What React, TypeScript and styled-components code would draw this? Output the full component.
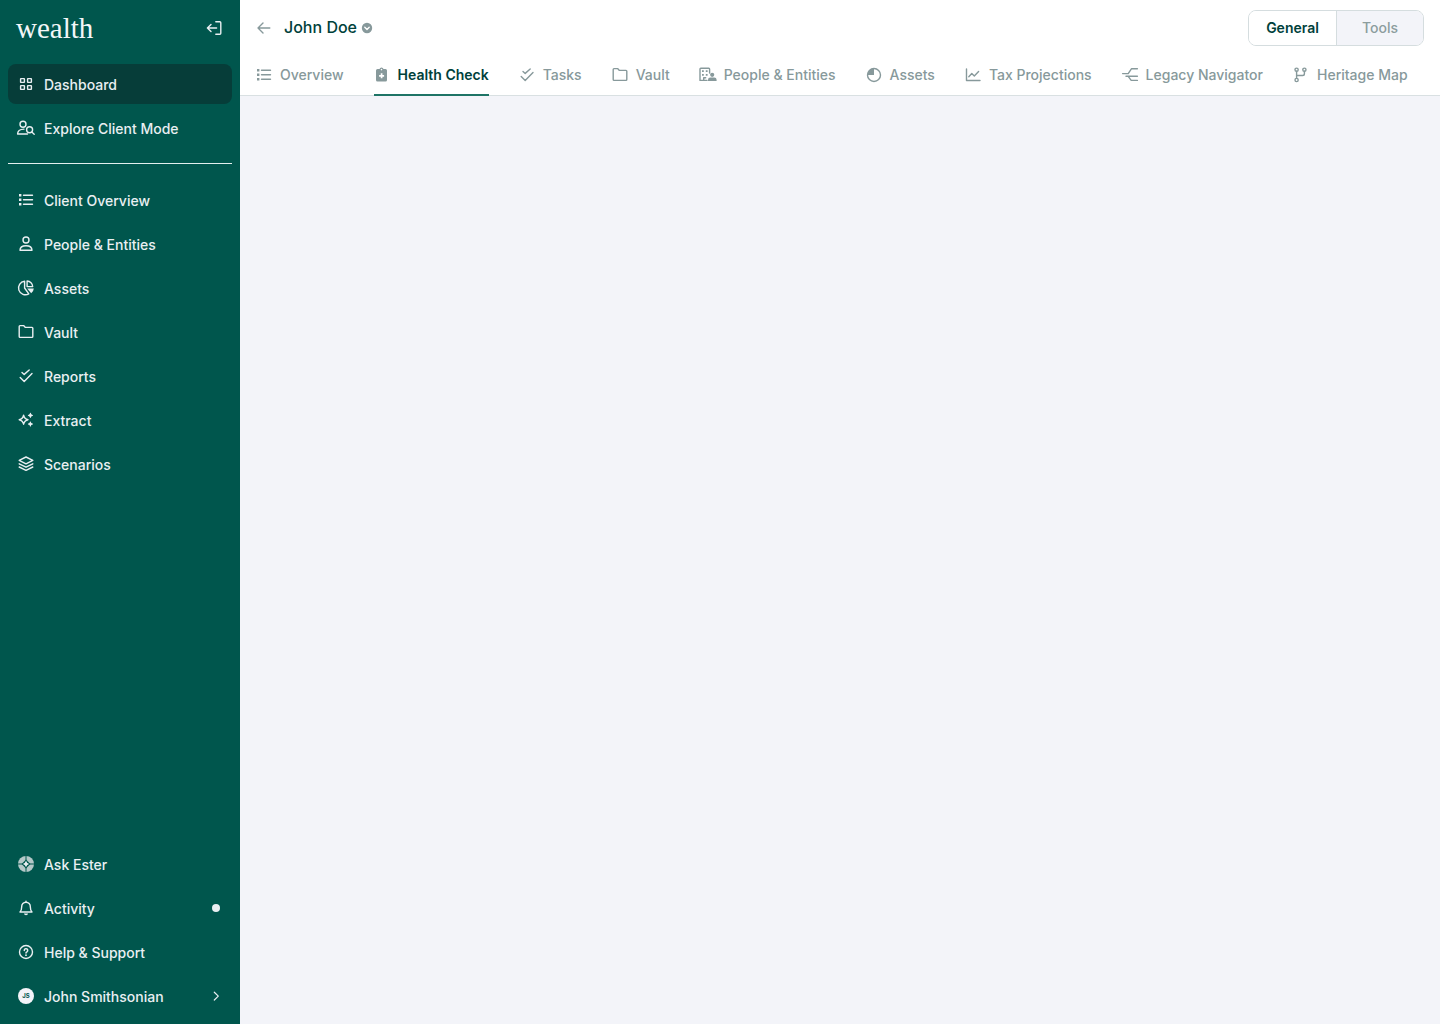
import React from "react";
import styled, { createGlobalStyle, css } from "styled-components";

const GlobalStyle = createGlobalStyle`
  *, *::before, *::after { box-sizing: border-box; }
  body {
    margin: 0;
    background: #f3f4f9;
    font-family: Inter, "Liberation Sans", sans-serif;
    font-size: 14px;
    line-height: 20px;
    font-weight: 500;
  }
  button { font: inherit; color: inherit; background: none; border: 0; padding: 0; cursor: pointer; }
  a { color: inherit; text-decoration: none; }
`;

const Shell = styled.div`
  display: grid;
  grid-template-columns: 240px minmax(0, 1fr);
  min-height: 100vh;
`;

const Sidebar = styled.aside`
  display: flex;
  flex-direction: column;
  padding: 0 8px 8px;
  background: #00564d;
  color: #e9eff2;
`;

const Brand = styled.div`
  display: flex;
  align-items: center;
  justify-content: space-between;
  height: 56px;
  margin-bottom: 8px;
  padding: 0 10px 0 8px;
`;

const Wordmark = styled.a`
  font-family: "Liberation Serif", serif;
  font-size: 29px;
  font-weight: 400;
  line-height: 32px;
  color: #f3f6f8;
`;

const IconButton = styled.button`
  display: flex;
  align-items: center;
`;

const NavList = styled.nav`
  display: flex;
  flex-direction: column;
  gap: 4px;
`;

const Divider = styled.hr`
  width: 100%;
  height: 1px;
  margin: 15px 0 16px;
  border: 0;
  background: #e3f0ef;
`;

const navRow = css`
  display: flex;
  align-items: center;
  gap: 10px;
  width: 100%;
  height: 40px;
  padding: 0 12px 0 10px;
  border-radius: 8px;
  text-align: left;
`;

const NavLink = styled.a<{ $active?: boolean }>`
  ${navRow}
  background: ${(p) => (p.$active ? "#063d39" : "transparent")};
`;

const NavButton = styled.button`
  ${navRow}
`;

const NavLabel = styled.span`
  flex: 1;
  padding-top: 2px;
`;

const Unread = styled.span`
  width: 8px;
  height: 8px;
  border-radius: 50%;
  background: #e9eff2;
`;

const Avatar = styled.span`
  display: grid;
  place-items: center;
  width: 16px;
  height: 16px;
  border-radius: 50%;
  background: #f3f4f9;
  color: #00564d;
  font-size: 6px;
  font-weight: 700;
  line-height: 8px;
`;

const Footer = styled(NavList)`
  margin-top: auto;
`;

const Page = styled.div`
  display: flex;
  flex-direction: column;
`;

const Header = styled.header`
  background: #fff;
  border-bottom: 1px solid #d9e0e2;
`;

const TitleBar = styled.div`
  display: flex;
  align-items: center;
  justify-content: space-between;
  height: 56px;
  padding: 0 16px;
`;

const ClientTitle = styled.div`
  display: flex;
  align-items: center;
  gap: 12px;
  color: #87999b;
`;

const ClientName = styled.h1`
  margin: 0;
  padding-bottom: 2px;
  font-size: 16px;
  line-height: 24px;
  font-weight: 500;
  color: #00413b;
`;

const ClientPicker = styled.div`
  display: flex;
  align-items: center;
  gap: 4px;
`;

const Segmented = styled.div`
  display: grid;
  grid-template-columns: 1fr 1fr;
  width: 176px;
  height: 36px;
  overflow: hidden;
  border: 1px solid #d5dddf;
  border-radius: 8px;
`;

const Segment = styled.button<{ $active?: boolean }>`
  font-weight: ${(p) => (p.$active ? 600 : 500)};
  color: ${(p) => (p.$active ? "#00413b" : "#8c9d9e")};
  background: ${(p) => (p.$active ? "#fff" : "#f3f4f9")};
  & + & { border-left: 1px solid #d5dddf; }
`;

const Tabs = styled.nav`
  display: flex;
  gap: 30px;
  height: 39px;
  padding: 0 16px;
`;

const Tab = styled.a<{ $active?: boolean }>`
  display: flex;
  align-items: center;
  gap: 8px;
  height: 40px;
  white-space: nowrap;
  color: ${(p) => (p.$active ? "#00413b" : "#87999b")};
  font-weight: ${(p) => (p.$active ? 600 : 500)};
  border-bottom: 2px solid ${(p) => (p.$active ? "#1e7466" : "transparent")};
`;

const TabIcon = styled.span`
  display: flex;
  color: #87999b;
`;

const Content = styled.main`
  flex: 1;
  background: #f3f4f9;
`;

const Glyph = styled.svg`
  display: block;
  flex: none;
  overflow: visible;
  fill: none;
  stroke: currentColor;
  stroke-width: 1.4;
  stroke-linecap: round;
  stroke-linejoin: round;
  .solid { fill: currentColor; stroke: none; }
`;

function Icon({ children, width = 16, height = 16 }: { children: React.ReactNode; width?: number; height?: number }) {
  return (
    <Glyph width={width} height={height} viewBox={`0 0 ${width} ${height}`} aria-hidden="true">
      {children}
    </Glyph>
  );
}

const icons = {
  grid: (
    <Icon>
      <rect x="2.600" y="2.600" width="3.800" height="3.800" rx=".4" />
      <rect x="9.600" y="2.600" width="3.800" height="3.800" rx=".4" />
      <rect x="2.600" y="9.600" width="3.800" height="3.800" rx=".4" />
      <rect x="9.600" y="9.600" width="3.800" height="3.800" rx=".4" />
    </Icon>
  ),
  explore: (
    <Icon>
      <circle cx="5" cy="4.200" r="3" />
      <path d="M9.500 14H-.4c0-3 2.200-4.800 6.400-4.900" />
      <circle cx="11.600" cy="9.700" r="3" />
      <path d="m13.800 12 2.400 2.200" />
    </Icon>
  ),
  list: (
    <Icon>
      <path className="solid" d="M1 2h2.400v2.400H1zM1 6.500h2.400v2.400H1zM1 11h2.400v2.400H1z" />
      <path d="M5.500 3.200h9M5.500 7.700h9M5.500 12.200h9" />
    </Icon>
  ),
  person: (
    <Icon>
      <circle cx="8" cy="4" r="3" />
      <path d="M2 14.300c0-3 2.400-4.600 6-4.600s6 1.600 6 4.600z" />
    </Icon>
  ),
  pie: (
    <Icon>
      <path d="M6.600 1.200a6.800 6.800 0 1 0 4.200 12.600L6.600 8z" />
      <path d="M9.100 1v5.600h5.600A5.800 5.800 0 0 0 9.100 1z" />
      <path className="solid" d="M9.200 8.400h6.600a7 7 0 0 1-2.600 4.800z" />
    </Icon>
  ),
  folder: (
    <Icon>
      <path d="M1.200 12.600V2.400q0-.8.8-.8h3.600l1.800 1.800H14q.8 0 .8.8v8.400q0 .8-.8.8H2q-.8 0-.8-.8z" />
    </Icon>
  ),
  checks: (
    <Icon>
      <path d="m4 4.400 2.200 2 5-4.400M2.200 9.400l4 4L14 5.600" />
    </Icon>
  ),
  sparkles: (
    <Icon>
      <path d="M5.600 3.200Q6.400 7 10 7.700 6.400 8.500 5.600 12.200 4.800 8.500 1.200 7.700 4.800 7 5.600 3.200z" />
      <path className="solid" d="M12.400.6q.5 2.300 2.700 2.800-2.200.5-2.700 2.700-.5-2.200-2.700-2.700 2.200-.5 2.700-2.800zM12.400 9.300q.5 2.300 2.700 2.800-2.200.5-2.700 2.700-.5-2.200-2.700-2.700 2.200-.5 2.700-2.800z" />
      <path d="M12.400 1.600v3.600M10.600 3.400h3.600M12.400 10.300v3.600M10.600 12.100h3.600" strokeWidth=".8" />
    </Icon>
  ),
  layers: (
    <Icon>
      <path d="m8 1 6.800 3.400L8 7.800 1.200 4.400z" />
      <path d="M1.200 7.800 8 11.200l6.800-3.400M1.200 11 8 14.400l6.800-3.400" />
    </Icon>
  ),
  ester: (
    <Icon>
      <circle cx="8" cy="8" r="8" fill="#b4c8c8" stroke="none" />
      <path d="M8 0v16M0 8h16" stroke="#00564d" strokeWidth="1" />
      <path d="m8 3.600 4.400 4.400L8 12.400 3.600 8z" fill="#00564d" stroke="none" />
      <path className="solid" d="M8 4.800Q8.600 7.400 11.200 8 8.600 8.600 8 11.200 7.400 8.600 4.800 8 7.400 7.400 8 4.800z" />
      <circle className="solid" cx="8" cy="8" r="1.600" />
    </Icon>
  ),
  bell: (
    <Icon>
      <path d="M2 12h12c-1.200-1.200-1.700-2.200-1.700-5.200A4.300 4.300 0 0 0 8 2.200a4.300 4.300 0 0 0-4.300 4.600C3.700 9.800 3.200 10.800 2 12zM8 1.200v1" />
      <path className="solid" d="M6 13.400h4a2 1.800 0 0 1-4 0z" />
    </Icon>
  ),
  help: (
    <Icon>
      <circle cx="8" cy="8" r="6.500" />
      <path d="M6.300 6.400A1.700 1.700 0 1 1 8.900 7.800Q8 8.300 8 9" strokeWidth="1.500" />
      <circle className="solid" cx="8" cy="11.200" r=".9" />
    </Icon>
  ),
  chevron: (
    <Icon width={8}>
      <path d="m2.300 4.200 4 3.900-4 3.900" strokeWidth="1.200" />
    </Icon>
  ),
  collapse: (
    <Icon>
      <path d="M9.800 1.800h4q1 0 1 1v10.400q0 1-1 1h-4M10.600 8H1.400M5 4.400 1.400 8 5 11.600" />
    </Icon>
  ),
  back: (
    <Icon>
      <path d="M13.800 8H2M7 3 2 8l5 5" />
    </Icon>
  ),
  picker: (
    <Icon width={12}>
      <circle className="solid" cx="6" cy="8" r="5.200" />
      <path d="M3.800 7.300 6 9.400l2.200-2.100" stroke="#fff" />
    </Icon>
  ),
  clipboard: (
    <Icon>
      <path className="solid" fillRule="evenodd" d="M3.500 2H5.500Q6 .4 7.500.4T9.500 2h2q1.500 0 1.500 1.500v9.500q0 1.500-1.500 1.500h-8Q2 14.500 2 13V3.500Q2 2 3.500 2zM7.500 1.800a.8.8 0 1 0 0 1.600.8.8 0 0 0 0-1.600z" />
      <path d="M7.600 6.300v5M5.100 8.800h5" stroke="#fff" strokeWidth="1.700" strokeLinecap="butt" />
    </Icon>
  ),
  building: (
    <Icon>
      <path d="M9.600 6V2q0-.8-.8-.8H.8Q0 1.200 0 2v11.400h7M3.700 13.400v-2.600h2" />
      <path className="solid" d="M2 3.300h1.800v1.800H2zM5.800 3.300h1.800v1.800H5.800zM2 7h1.800v1.800H2zM5.800 7h1.800v1.800H5.800z" />
      <circle className="solid" cx="12.200" cy="7.800" r="2.100" />
      <path className="solid" d="M8 14v-1.200q0-2.200 2.400-2.200h3.800q2.400 0 2.400 2.200V14z" />
    </Icon>
  ),
  quarter: (
    <Icon>
      <circle cx="8" cy="8" r="6.500" />
      <path className="solid" d="M8 1.500V8H1.500A6.500 6.500 0 0 1 8 1.500z" />
    </Icon>
  ),
  chart: (
    <Icon>
      <path d="M1.500 2v11.500H15M3.800 9.800l3-3.300 2.500 2.400 4.300-4.500" />
    </Icon>
  ),
  navigator: (
    <Icon>
      <path d="M.6 6.600h5.600l3.200-4.800h6M4 9.200h11.400M6 9.200l3.200 4.200h6.200" />
    </Icon>
  ),
  branch: (
    <Icon>
      <circle cx="3.600" cy="2.700" r="1.600" />
      <circle cx="11.400" cy="2.700" r="1.600" />
      <circle cx="3.600" cy="13" r="1.600" />
      <path d="M3.600 4.300v7.100M3.600 8.500h6q1.800 0 1.800-1.800V4.300" />
    </Icon>
  ),
};

type IconName = keyof typeof icons;

const modeLinks: { icon: IconName; label: string; active?: boolean }[] = [
  { icon: "grid", label: "Dashboard", active: true },
  { icon: "explore", label: "Explore Client Mode" },
];

const clientLinks: { icon: IconName; label: string }[] = [
  { icon: "list", label: "Client Overview" },
  { icon: "person", label: "People & Entities" },
  { icon: "pie", label: "Assets" },
  { icon: "folder", label: "Vault" },
  { icon: "checks", label: "Reports" },
  { icon: "sparkles", label: "Extract" },
  { icon: "layers", label: "Scenarios" },
];

const tabs: { icon: IconName; label: string; active?: boolean }[] = [
  { icon: "list", label: "Overview" },
  { icon: "clipboard", label: "Health Check", active: true },
  { icon: "checks", label: "Tasks" },
  { icon: "folder", label: "Vault" },
  { icon: "building", label: "People & Entities" },
  { icon: "quarter", label: "Assets" },
  { icon: "chart", label: "Tax Projections" },
  { icon: "navigator", label: "Legacy Navigator" },
  { icon: "branch", label: "Heritage Map" },
];

export default function App() {
  return (
    <>
      <GlobalStyle />
      <Shell>
        <Sidebar>
          <Brand>
            <Wordmark href="#">wealth</Wordmark>
            <IconButton type="button" aria-label="Collapse sidebar">{icons.collapse}</IconButton>
          </Brand>
          <NavList aria-label="Mode">
            {modeLinks.map((item) => (
              <NavLink key={item.label} href="#" $active={item.active}>
                {icons[item.icon]}
                <NavLabel>{item.label}</NavLabel>
              </NavLink>
            ))}
          </NavList>
          <Divider />
          <NavList aria-label="Client">
            {clientLinks.map((item) => (
              <NavLink key={item.label} href="#">
                {icons[item.icon]}
                <NavLabel>{item.label}</NavLabel>
              </NavLink>
            ))}
          </NavList>
          <Footer aria-label="Account">
            <NavButton type="button">
              {icons.ester}
              <NavLabel>Ask Ester</NavLabel>
            </NavButton>
            <NavLink href="#">
              {icons.bell}
              <NavLabel>Activity</NavLabel>
              <Unread />
            </NavLink>
            <NavLink href="#">
              {icons.help}
              <NavLabel>Help &amp; Support</NavLabel>
            </NavLink>
            <NavButton type="button">
              <Avatar>JS</Avatar>
              <NavLabel>John Smithsonian</NavLabel>
              {icons.chevron}
            </NavButton>
          </Footer>
        </Sidebar>
        <Page>
          <Header>
            <TitleBar>
              <ClientTitle>
                <IconButton type="button" aria-label="Back">{icons.back}</IconButton>
                <ClientPicker>
                  <ClientName>John Doe</ClientName>
                  <IconButton type="button" aria-label="Switch client">{icons.picker}</IconButton>
                </ClientPicker>
              </ClientTitle>
              <Segmented>
                <Segment type="button" aria-pressed="true" $active>General</Segment>
                <Segment type="button" aria-pressed="false">Tools</Segment>
              </Segmented>
            </TitleBar>
            <Tabs aria-label="Client sections">
              {tabs.map((tab) => (
                <Tab key={tab.label} href="#" $active={tab.active}>
                  <TabIcon>{icons[tab.icon]}</TabIcon>
                  {tab.label}
                </Tab>
              ))}
            </Tabs>
          </Header>
          <Content />
        </Page>
      </Shell>
    </>
  );
}
